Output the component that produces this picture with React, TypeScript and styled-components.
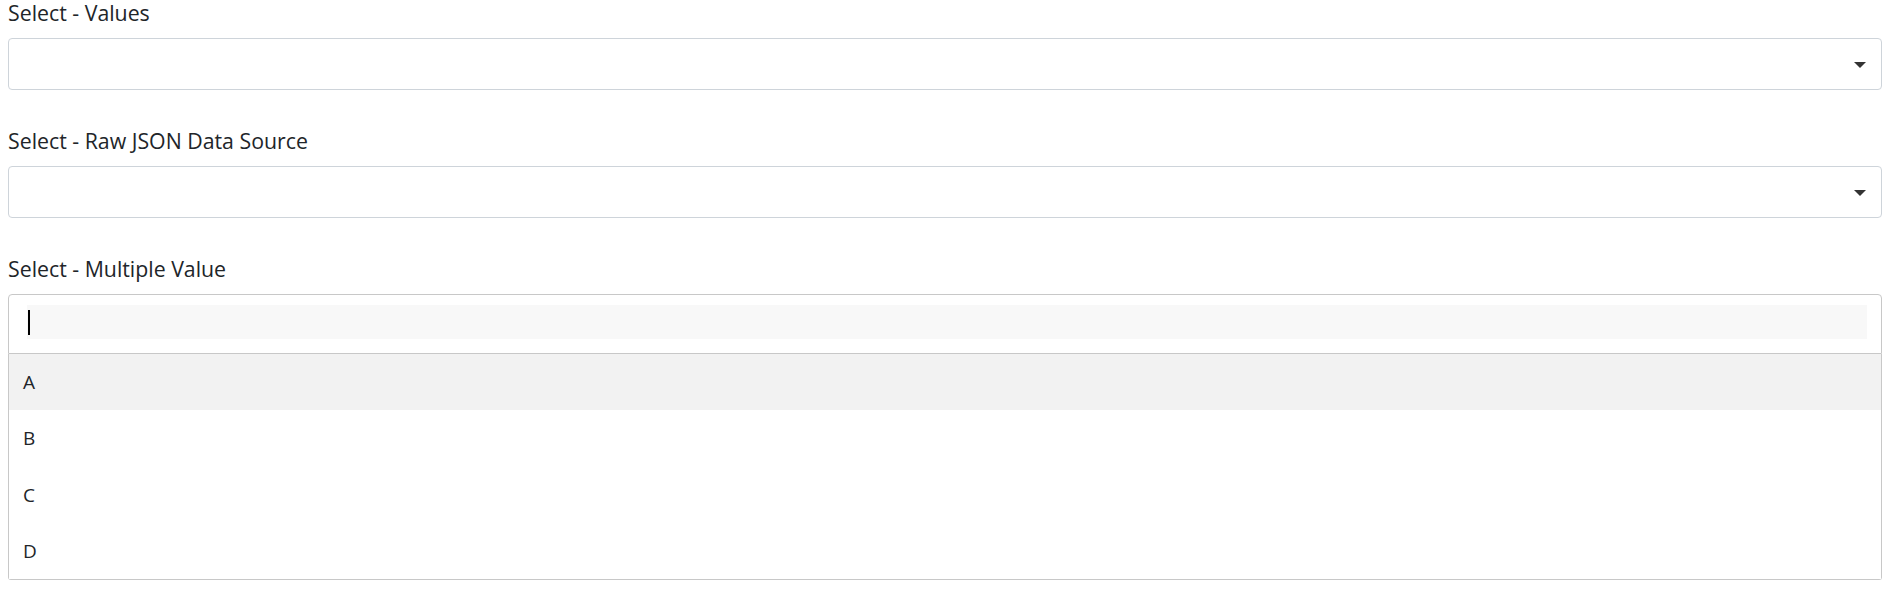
import React from "react";
import styled, { createGlobalStyle } from "styled-components";

const Global = createGlobalStyle`
  html, body { margin: 0; padding: 0; background: #fff; }
  body { font-family: "Open Sans", "Noto Sans", sans-serif; color: #212529; }
  * { box-sizing: border-box; }
`;

const Page = styled.div`
  padding: 0 11px 0 8px;
  display: flex;
  flex-direction: column;
  gap: 38px;
`;

const Field = styled.div`
  display: flex;
  flex-direction: column;
`;

const Label = styled.label`
  font-size: 21.3px;
  line-height: 26px;
  margin-bottom: 12px;
  color: #212529;
`;

const SelectBox = styled.div`
  height: 52px;
  border: 1px solid #ced4da;
  border-radius: 4px;
  background: #fff;
  display: flex;
  align-items: center;
  justify-content: flex-end;
  padding-right: 15px;
`;

const Caret = styled.span`
  width: 0;
  height: 0;
  border-style: solid;
  border-width: 6px 6px 0 6px;
  border-color: #333 transparent transparent transparent;
  margin-top: 1px;
`;

const MultiBox = styled.div`
  border: 1px solid #c8c8c8;
  border-radius: 4px 4px 0 0;
  background: #fff;
  padding: 10px 14px 14px 18px;
`;

const SearchInput = styled.div`
  height: 34px;
  background: #f8f8f8;
  display: flex;
  align-items: center;
  padding-left: 1px;
`;

const TextCursor = styled.span`
  width: 2px;
  height: 25px;
  background: #000;
`;

const Dropdown = styled.div`
  border: 1px solid #c8c8c8;
  border-top: none;
  border-radius: 0 0 3px 3px;
  background: #fff;
  display: flex;
  flex-direction: column;
`;

const Option = styled.div<{ $active?: boolean }>`
  height: 56.25px;
  display: flex;
  align-items: center;
  padding-left: 14px;
  font-size: 19px;
  color: #212529;
  background: ${(p) => (p.$active ? "#f2f2f2" : "#fff")};
`;

export default function App() {
  const options = ["A", "B", "C", "D"];
  return (
    <>
      <Global />
      <Page>
        <Field>
          <Label>Select - Values</Label>
          <SelectBox>
            <Caret />
          </SelectBox>
        </Field>
        <Field>
          <Label>Select - Raw JSON Data Source</Label>
          <SelectBox>
            <Caret />
          </SelectBox>
        </Field>
        <Field>
          <Label>Select - Multiple Value</Label>
          <MultiBox>
            <SearchInput>
              <TextCursor />
            </SearchInput>
          </MultiBox>
          <Dropdown>
            {options.map((o, i) => (
              <Option key={o} $active={i === 0}>
                {o}
              </Option>
            ))}
          </Dropdown>
        </Field>
      </Page>
    </>
  );
}
